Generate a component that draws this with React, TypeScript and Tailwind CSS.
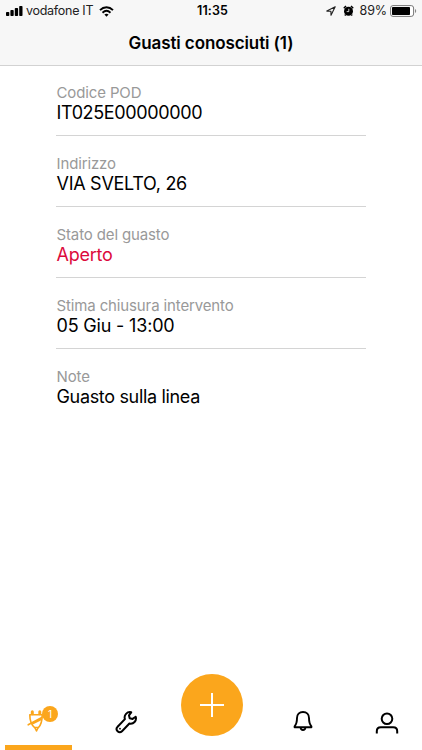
import type { ReactNode } from 'react';

function StatusBar() {
  return (
    <div className="flex h-[22px] items-center text-[12px] leading-[22px]">
      <div className="flex flex-1 items-center pl-[6px]">
        <svg width="17" height="10" viewBox="0 0 17 10" fill="#000">
          <rect x="0" y="6" width="3.3" height="4" rx=".8" />
          <rect x="4.4" y="4" width="3.3" height="6" rx=".8" />
          <rect x="8.8" y="2" width="3.3" height="8" rx=".8" />
          <rect x="13.2" y="0" width="3.3" height="10" rx=".8" />
        </svg>
        <span className="ml-[3px] text-[12.5px] tracking-[-0.28px] text-[#222]">vodafone IT</span>
        <svg className="ml-[6px]" width="15" height="11" viewBox="0 0 15 11" fill="none" stroke="#000" strokeWidth="1.9">
          <path d="M1 4.1C4.8.3 10.2.3 14 4.1" />
          <path d="M3.5 6.7c2.4-2.2 5.6-2.2 8 0" />
          <path d="M5.4 8.5c1.3-1 2.9-1 4.2 0L7.5 10.7Z" fill="#000" stroke="none" />
        </svg>
      </div>
      <span className="pl-[2px] text-[12.5px] font-semibold tracking-[0.1px]">11:35</span>
      <div className="flex flex-1 items-center justify-end pr-[5px]">
        <svg width="10" height="10" viewBox="0 0 10 10" fill="none" stroke="#222" strokeWidth="1.1" strokeLinejoin="round">
          <path d="M9.2.8.8 5.1l4.1.1.1 4.1Z" />
        </svg>
        <svg className="ml-[7px]" width="11" height="12" viewBox="0 0 11 12">
          <circle cx="5.5" cy="6.3" r="4.5" />
          <path d="M.8 3.2 3 1M10.2 3.2 8 1M2.5 9.7l-.7.8M8.5 9.7l.7.8" stroke="#000" strokeWidth="1.5" />
          <path d="M5.8 3.8v2.8H3.7" fill="none" stroke="#fff" strokeWidth=".8" />
        </svg>
        <span className="ml-[6px] text-[12.5px] tracking-[-0.1px] text-[#222]">89%</span>
        <svg className="ml-[3px]" width="27" height="12" viewBox="0 0 27 12">
          <rect x=".6" y=".6" width="23" height="10.8" rx="2.4" fill="#fff" stroke="#777" strokeWidth="1" />
          <rect x="2" y="2" width="18" height="8" rx=".8" />
          <path d="M25 4v4c1.6-.5 1.6-3.5 0-4Z" fill="#888" />
        </svg>
      </div>
    </div>
  );
}

interface FieldProps {
  label: string;
  children: ReactNode;
  className: string;
  last?: boolean;
}

function Field({ label, children, className, last }: FieldProps) {
  return (
    <div className={`h-[71px] pl-[0.5px] pt-[18px] ${last ? '' : 'border-b border-[#d4d4d4]'}`}>
      <div className="text-[15px] leading-[19px] tracking-[-0.13px] text-[#999]">{label}</div>
      <div className={`text-[18px] leading-[22px] ${className}`}>{children}</div>
    </div>
  );
}

function TabBar() {
  return (
    <nav className="flex h-[80px] items-end">
      <div className="ml-[5px] flex h-[44px] w-[67px] flex-col justify-between">
        <div className="relative ml-[22px] h-[28px] w-[33px]">
          <svg width="22" height="28" viewBox="0 0 22 28" fill="none" stroke="#fba61c" strokeWidth="1.6" strokeLinejoin="round" strokeLinecap="round">
            <path d="M2.8 8.800h12.400c0 5.500-.8 9.700-3.700 12.700h-4C4.200 18.600 2.800 14.500 2.800 8.800Z" />
            <path d="M5.300 7.800V5.800M12.800 7.800V5.800" strokeWidth="3" />
            <path d="M7.800 21.500 9.500 25l1.700-3.500M1.200 18.800 14.800 11.500M6 17.500l8-4" />
          </svg>
          <span className="absolute left-[15px] top-0 h-[16px] w-[16px] rounded-full bg-[#fba61c] text-center text-[10px] leading-[16px] text-white">1</span>
        </div>
        <div className="h-[5px] bg-[#fba61c]" />
      </div>
      <svg className="mb-[16px] ml-[42px]" width="24" height="24" viewBox="0 0 24 24" fill="none" stroke="#000" strokeWidth="2" strokeLinejoin="round">
        <path d="M17.2 2.300a5.300 5.300 0 0 0-6.300 6.800L3.600 16.800a3.100 3.100 0 0 0 4.400 4.400l7.400-7.700a5.300 5.300 0 0 0 6.300-6.800L18.600 8.900l-2.900-.6-.7-2.900Z" />
        <circle cx="6" cy="18.700" r=".9" fill="#000" stroke="none" />
      </svg>
      <button aria-label="Aggiungi" className="mb-[14px] ml-[43px] flex h-[62px] w-[62px] items-center justify-center rounded-full bg-[#fba61c]">
        <svg width="24" height="24" viewBox="0 0 24 24" stroke="#fff" strokeWidth="2">
          <path d="M12 0v24M0 12h24" />
        </svg>
      </button>
      <svg className="mb-[17px] ml-[49px]" width="22" height="24" viewBox="0 0 22 24" fill="none" stroke="#000" strokeWidth="1.9" strokeLinejoin="round" strokeLinecap="round">
        <path d="M5 9c0-3.500 2.300-6 6-6s6 2.500 6 6c0 5 .8 6.500 2.400 8.300v1H2.600v-1C4.200 15.500 5 14 5 9Z" />
        <path d="M8.700 19c.2 2.600 4.400 2.600 4.600 0" />
      </svg>
      <svg className="mb-[15px] ml-[60px]" width="26" height="24" viewBox="0 0 26 24" fill="none" stroke="#000" strokeWidth="2">
        <circle cx="13" cy="7.700" r="5.300" />
        <path d="M2.800 22.500v-2.300c0-2.600 1.600-3.900 4-3.900h12.400c2.400 0 4 1.300 4 3.900v2.300" />
      </svg>
    </nav>
  );
}

export default function App() {
  return (
    <div className="flex h-[750px] w-[422px] flex-col overflow-hidden bg-white font-['Inter','Liberation_Sans',sans-serif] text-black">
      <header className="h-[66px] border-b border-[#d2d2d2] bg-[#f7f7f7]">
        <StatusBar />
        <h1 className="text-center text-[17px] font-semibold leading-[43px] tracking-[-0.1px]">Guasti conosciuti (1)</h1>
      </header>
      <main className="-mt-px flex-1 px-[56px]">
        <Field label="Codice POD" className="tracking-[-0.36px]">IT025E00000000</Field>
        <Field label="Indirizzo" className="tracking-[-0.28px]">VIA SVELTO, 26</Field>
        <Field label="Stato del guasto" className="tracking-[-0.25px] text-[#dc0a3c]">Aperto</Field>
        <Field label="Stima chiusura intervento" className="tracking-[-0.18px]">05 Giu - 13:00</Field>
        <Field label="Note" className="tracking-[-0.33px]" last>Guasto sulla linea</Field>
      </main>
      <TabBar />
    </div>
  );
}
